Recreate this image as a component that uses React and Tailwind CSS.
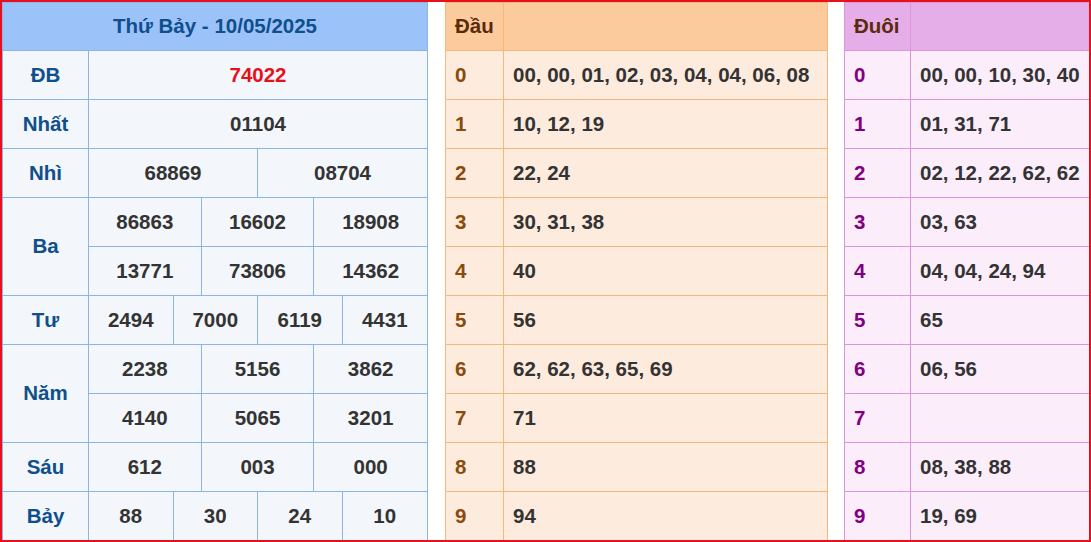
const B = 'border-[#8db4e6]';

function Cell({ children, cls = '' }) {
  return (
    <div className={`flex items-center justify-center border-r ${B} last:border-r-0 ${cls}`}>{children}</div>
  );
}

function Sub({ vals, red }) {
  return (
    <div className={`h-[49px] shrink-0 grid border-b ${B}`} style={{ gridTemplateColumns: `repeat(${vals.length}, minmax(0, 1fr))` }}>
      {vals.map((v, i) => (
        <Cell key={i} cls={red ? 'text-[#e8101a]' : 'text-[#333]'}>{v}</Cell>
      ))}
    </div>
  );
}

function Prize({ label, rows, red }) {
  return (
    <div className="flex shrink-0">
      <div className={`w-[86px] shrink-0 flex items-center justify-center border-r border-b ${B} text-[#0e4f8c]`}>{label}</div>
      <div className="flex-1 flex flex-col">
        {rows.map((r, i) => (
          <Sub key={i} vals={r} red={red} />
        ))}
      </div>
    </div>
  );
}

const prizes = [
  ['ĐB', [['74022']], true],
  ['Nhất', [['01104']]],
  ['Nhì', [['68869', '08704']]],
  ['Ba', [['86863', '16602', '18908'], ['13771', '73806', '14362']]],
  ['Tư', [['2494', '7000', '6119', '4431']]],
  ['Năm', [['2238', '5156', '3862'], ['4140', '5065', '3201']]],
  ['Sáu', [['612', '003', '000']]],
  ['Bảy', [['88', '30', '24', '10']]],
];

const dau = ['00, 00, 01, 02, 03, 04, 04, 06, 08', '10, 12, 19', '22, 24', '30, 31, 38', '40', '56', '62, 62, 63, 65, 69', '71', '88', '94'];
const duoi = ['00, 00, 10, 30, 40', '01, 31, 71', '02, 12, 22, 62, 62', '03, 63', '04, 04, 24, 94', '65', '06, 56', '', '08, 38, 88', '19, 69'];

function Loto({ title, data, c }) {
  return (
    <div className={`h-full flex flex-col border-x border-t ${c.border}`}>
      <div className={`h-[48px] shrink-0 flex ${c.head} border-b ${c.border}`}>
        <div className={`${c.w} shrink-0 flex items-center px-[9px] border-r ${c.border} text-[#5a2a0a]`}>{title}</div>
        <div className="flex-1" />
      </div>
      {data.map((d, i) => (
        <div key={i} className={`h-[49px] shrink-0 flex ${c.bg} border-b ${c.border}`}>
          <div className={`${c.w} shrink-0 flex items-center px-[9px] border-r ${c.border} ${c.num}`}>{i}</div>
          <div className="flex-1 flex items-center px-[9px] text-[#333] whitespace-nowrap">{d}</div>
        </div>
      ))}
    </div>
  );
}

export default function App() {
  return (
    <div className="w-[1091px] h-[542px] border-2 border-[#e8101a] flex overflow-hidden bg-white font-bold text-[20.5px]" style={{ fontFamily: '"Liberation Sans", Arial, sans-serif' }}>
      <div className={`w-[426px] shrink-0 flex flex-col border-x border-t ${B} bg-[#f3f6fa]`}>
        <div className={`h-[48px] shrink-0 flex items-center justify-center bg-[#9cc2fa] border-b ${B} text-[#0e4f8c]`}>Thứ Bảy - 10/05/2025</div>
        {prizes.map(([l, r, red]) => (
          <Prize key={l} label={l} rows={r} red={red} />
        ))}
      </div>
      <div className="w-[17px] shrink-0" />
      <div className="w-[383px] shrink-0">
        <Loto title="Đầu" data={dau} c={{ w: 'w-[58px]', border: 'border-[#f7b67a]', head: 'bg-[#fbcb9d]', bg: 'bg-[#fdebde]', num: 'text-[#8a4a0c]' }} />
      </div>
      <div className="w-[16px] shrink-0" />
      <div className="w-[300px] shrink-0">
        <Loto title="Đuôi" data={duoi} c={{ w: 'w-[66px]', border: 'border-[#dc95dc]', head: 'bg-[#e5aee9]', bg: 'bg-[#fcedfb]', num: 'text-[#800080]' }} />
      </div>
    </div>
  );
}
